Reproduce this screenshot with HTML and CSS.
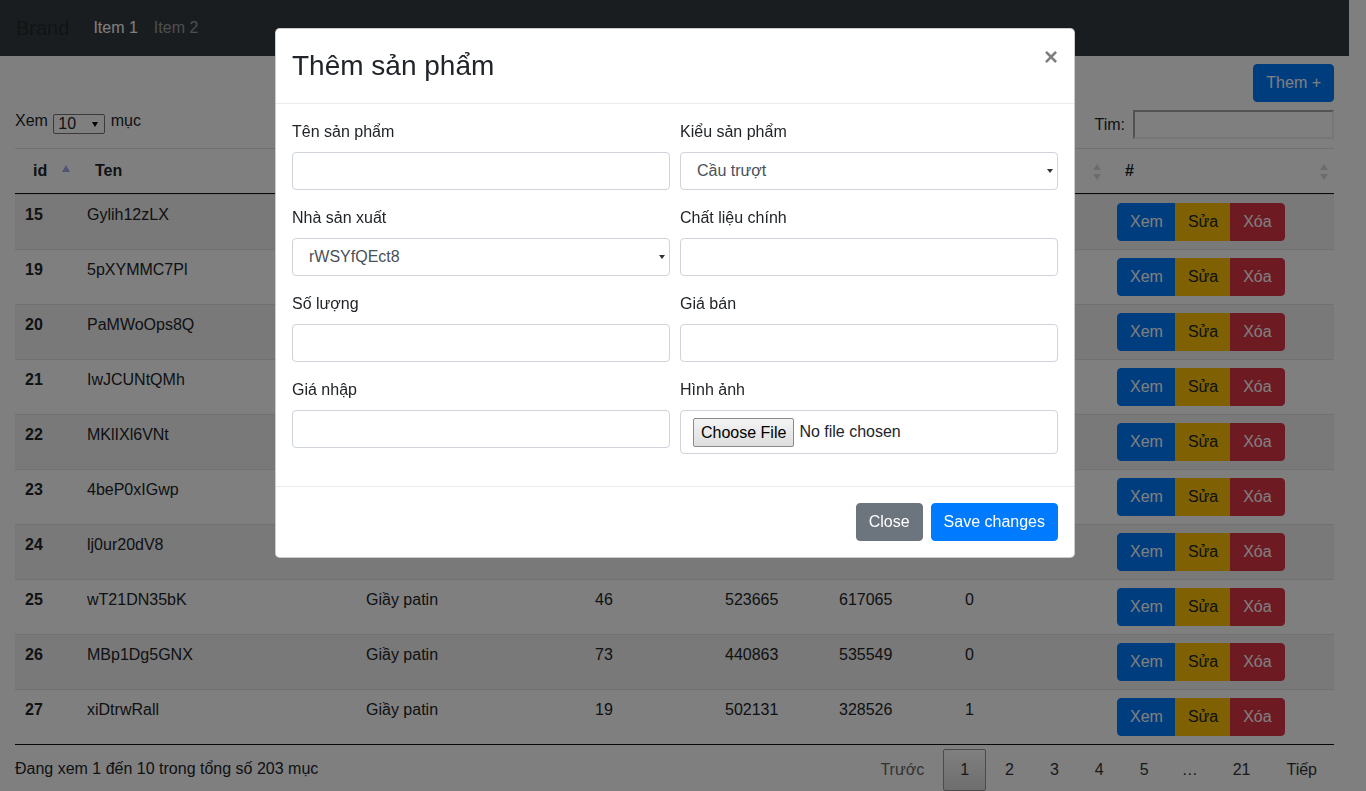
FILE: index.html
```html
<!DOCTYPE html>
<html lang="vi">
<head>
<meta charset="utf-8">
<title>Sản phẩm</title>
<link rel="stylesheet" href="styles.css">
</head>
<body>
<nav class="navbar">
  <span class="brand">Brand</span>
  <span class="nav-link active">Item 1</span>
  <span class="nav-link">Item 2</span>
</nav>

<div class="container">
  <div class="toolbar">
    <button class="btn btn-primary">Them +</button>
  </div>

  <div class="dt-top">
    <div class="dt-length">Xem <span class="len-select"><span>10</span><i class="len-arrow"></i></span> mục</div>
    <div class="dt-search"><span>Tim:</span><span class="search-input"></span></div>
  </div>

  <table class="dt">
    <colgroup>
      <col class="c1"><col class="c2"><col class="c3"><col class="c4"><col class="c5"><col class="c6"><col class="c7"><col class="c8">
    </colgroup>
    <thead>
      <tr>
        <th>id<i class="sort-asc"></i></th>
        <th>Ten<i class="sort-both"></i></th>
        <th>Loai<i class="sort-both"></i></th>
        <th>So luong<i class="sort-both"></i></th>
        <th>Gia nhap<i class="sort-both"></i></th>
        <th>Gia ban<i class="sort-both"></i></th>
        <th>Trang thai<i class="sort-both"></i></th>
        <th>#<i class="sort-both"></i></th>
      </tr>
    </thead>
    <tbody>
      <tr class="odd"><td class="id">15</td><td>Gylih12zLX</td><td>Giầy patin</td><td>12</td><td>412093</td><td>522341</td><td>0</td><td><div class="btn-group"><span class="gbtn xem">Xem</span><span class="gbtn sua">Sửa</span><span class="gbtn xoa">Xóa</span></div></td></tr>
      <tr><td class="id">19</td><td>5pXYMMC7Pl</td><td>Cầu trượt</td><td>58</td><td>338120</td><td>471905</td><td>1</td><td><div class="btn-group"><span class="gbtn xem">Xem</span><span class="gbtn sua">Sửa</span><span class="gbtn xoa">Xóa</span></div></td></tr>
      <tr class="odd"><td class="id">20</td><td>PaMWoOps8Q</td><td>Giầy patin</td><td>34</td><td>290441</td><td>610228</td><td>0</td><td><div class="btn-group"><span class="gbtn xem">Xem</span><span class="gbtn sua">Sửa</span><span class="gbtn xoa">Xóa</span></div></td></tr>
      <tr><td class="id">21</td><td>IwJCUNtQMh</td><td>Cầu trượt</td><td>81</td><td>505776</td><td>398214</td><td>1</td><td><div class="btn-group"><span class="gbtn xem">Xem</span><span class="gbtn sua">Sửa</span><span class="gbtn xoa">Xóa</span></div></td></tr>
      <tr class="odd"><td class="id">22</td><td>MKlIXl6VNt</td><td>Giầy patin</td><td>27</td><td>472810</td><td>553019</td><td>0</td><td><div class="btn-group"><span class="gbtn xem">Xem</span><span class="gbtn sua">Sửa</span><span class="gbtn xoa">Xóa</span></div></td></tr>
      <tr><td class="id">23</td><td>4beP0xIGwp</td><td>Giầy patin</td><td>65</td><td>361297</td><td>489602</td><td>0</td><td><div class="btn-group"><span class="gbtn xem">Xem</span><span class="gbtn sua">Sửa</span><span class="gbtn xoa">Xóa</span></div></td></tr>
      <tr class="odd"><td class="id">24</td><td>lj0ur20dV8</td><td>Cầu trượt</td><td>9</td><td>580314</td><td>634870</td><td>1</td><td><div class="btn-group"><span class="gbtn xem">Xem</span><span class="gbtn sua">Sửa</span><span class="gbtn xoa">Xóa</span></div></td></tr>
      <tr><td class="id">25</td><td>wT21DN35bK</td><td>Giầy patin</td><td>46</td><td>523665</td><td>617065</td><td>0</td><td><div class="btn-group"><span class="gbtn xem">Xem</span><span class="gbtn sua">Sửa</span><span class="gbtn xoa">Xóa</span></div></td></tr>
      <tr class="odd"><td class="id">26</td><td>MBp1Dg5GNX</td><td>Giầy patin</td><td>73</td><td>440863</td><td>535549</td><td>0</td><td><div class="btn-group"><span class="gbtn xem">Xem</span><span class="gbtn sua">Sửa</span><span class="gbtn xoa">Xóa</span></div></td></tr>
      <tr><td class="id">27</td><td>xiDtrwRall</td><td>Giầy patin</td><td>19</td><td>502131</td><td>328526</td><td>1</td><td><div class="btn-group"><span class="gbtn xem">Xem</span><span class="gbtn sua">Sửa</span><span class="gbtn xoa">Xóa</span></div></td></tr>
    </tbody>
  </table>

  <div class="dt-bottom">
    <div class="dt-info">Đang xem 1 đến 10 trong tổng số 203 mục</div>
    <div class="dt-paging">
      <span class="pbtn disabled">Trước</span>
      <span class="pbtn current">1</span>
      <span class="pbtn">2</span>
      <span class="pbtn">3</span>
      <span class="pbtn">4</span>
      <span class="pbtn">5</span>
      <span class="ellipsis">…</span>
      <span class="pbtn">21</span>
      <span class="pbtn">Tiếp</span>
    </div>
  </div>
</div>

<div class="modal">
  <div class="modal-dialog">
    <div class="modal-content">
      <div class="modal-header">
        <h3 class="modal-title">Thêm sản phẩm</h3>
        <span class="close">×</span>
      </div>
      <div class="modal-body">
        <div class="form-row">
          <div class="col">
            <label class="lbl">Tên sản phẩm</label>
            <div class="field"></div>
          </div>
          <div class="col">
            <label class="lbl">Kiểu sản phẩm</label>
            <div class="field select">Cầu trượt<i class="sel-arrow"></i></div>
          </div>
        </div>
        <div class="form-row">
          <div class="col">
            <label class="lbl">Nhà sản xuất</label>
            <div class="field select">rWSYfQEct8<i class="sel-arrow"></i></div>
          </div>
          <div class="col">
            <label class="lbl">Chất liệu chính</label>
            <div class="field"></div>
          </div>
        </div>
        <div class="form-row">
          <div class="col">
            <label class="lbl">Số lượng</label>
            <div class="field"></div>
          </div>
          <div class="col">
            <label class="lbl">Giá bán</label>
            <div class="field"></div>
          </div>
        </div>
        <div class="form-row">
          <div class="col">
            <label class="lbl">Giá nhập</label>
            <div class="field"></div>
          </div>
          <div class="col">
            <label class="lbl">Hình ảnh</label>
            <div class="field file"><span class="file-btn">Choose File</span><span>No file chosen</span></div>
          </div>
        </div>
      </div>
      <div class="modal-footer">
        <span class="btn btn-secondary">Close</span>
        <span class="btn btn-primary">Save changes</span>
      </div>
    </div>
  </div>
</div>
</body>
</html>
```

FILE: styles.css
```css
* { box-sizing: border-box; }
html, body { margin: 0; }
body {
  padding-right: 17px;
  font-family: "Liberation Sans", Arial, sans-serif;
  font-size: 16px;
  line-height: 1.5;
  color: #212529;
  background: #fff;
}

/* navbar */
.navbar {
  height: 56px;
  background: #343a40;
  display: flex;
  align-items: center;
  padding: 0 16px;
}
.brand {
  font-size: 20px;
  line-height: 30px;
  color: rgba(0, 0, 0, .35);
  margin-right: 16px;
}
.nav-link { padding: 0 8px; color: rgba(255, 255, 255, .5); }
.nav-link.active { color: #fff; }

.container { padding: 0 15px; }

.toolbar { display: flex; justify-content: flex-end; padding-top: 8px; }

.btn {
  display: inline-block;
  font: inherit;
  font-size: 16px;
  line-height: 24px;
  padding: 6px 12px;
  border: 1px solid transparent;
  border-radius: 4px;
  color: #fff;
}
.btn-primary { background: #007bff; border-color: #007bff; }
.btn-secondary { background: #6c757d; border-color: #6c757d; }

/* datatable top */
.dt-top {
  display: flex;
  justify-content: space-between;
  align-items: flex-start;
  margin-top: 7px;
  height: 30px;
}
.dt-length { line-height: 24px; }
.len-select {
  display: inline-flex;
  align-items: center;
  justify-content: space-between;
  width: 52px;
  height: 20px;
  margin: 0 1px;
  padding: 0 6px 0 4px;
  border: 1px solid #767676;
  border-radius: 2px;
  vertical-align: -3px;
  line-height: 18px;
}
.len-arrow {
  width: 0; height: 0;
  border-left: 3.5px solid transparent;
  border-right: 3.5px solid transparent;
  border-top: 5px solid #000;
}
.dt-search { display: flex; align-items: center; gap: 8px; margin-top: 1px; }
.search-input {
  display: block;
  width: 201px;
  height: 29px;
  border-style: solid;
  border-width: 2px;
  border-color: #a4a4a4 #ececec #ececec #a4a4a4;
  background: #fff;
}

/* table */
.dt {
  width: 1319px;
  table-layout: fixed;
  border-collapse: separate;
  border-spacing: 0;
  margin-top: 9px;
  border-bottom: 1px solid #111;
}
.c1 { width: 62px; } .c2 { width: 279px; } .c3 { width: 229px; } .c4 { width: 130px; }
.c5 { width: 114px; } .c6 { width: 126px; } .c7 { width: 152px; } .c8 { width: 227px; }
.dt th {
  position: relative;
  text-align: left;
  font-weight: 700;
  padding: 10px 18px;
  line-height: 24px;
  border-top: 1px solid #dee2e6;
  border-bottom: 1px solid #111;
  white-space: nowrap;
  overflow: hidden;
}
.sort-asc {
  position: absolute;
  right: 7px;
  top: 16px;
  width: 0; height: 0;
  border-left: 4.5px solid transparent;
  border-right: 4.5px solid transparent;
  border-bottom: 7px solid #a6a6ec;
}
.sort-both {
  position: absolute;
  right: 5px;
  top: 15px;
  width: 9px;
  height: 16px;
}
.sort-both::before, .sort-both::after {
  content: "";
  position: absolute;
  left: 0;
  width: 0; height: 0;
  border-left: 4.5px solid transparent;
  border-right: 4.5px solid transparent;
}
.sort-both::before { top: 0; border-bottom: 6px solid #d9d9d9; }
.sort-both::after { bottom: 0; border-top: 6px solid #d9d9d9; }

.dt td {
  padding: 8px 10px;
  line-height: 24px;
  vertical-align: top;
  border-top: 1px solid #dee2e6;
  white-space: nowrap;
}
.dt tr.odd td { background: #f2f2f2; }
.dt td.id { font-weight: 700; }

.btn-group { display: inline-flex; }
.gbtn {
  display: inline-block;
  padding: 6px 12px;
  line-height: 24px;
  border: 1px solid transparent;
  color: #fff;
}
.gbtn + .gbtn { margin-left: -1px; }
.gbtn.xem { background: #007bff; border-color: #007bff; border-radius: 4px 0 0 4px; }
.gbtn.sua { background: #ffc107; border-color: #ffc107; color: #212529; }
.gbtn.xoa { background: #dc3545; border-color: #dc3545; border-radius: 0 4px 4px 0; }

/* bottom */
.dt-bottom { display: flex; justify-content: space-between; align-items: flex-start; }
.dt-info { padding-top: 12px; line-height: 24px; }
.dt-paging { display: flex; padding-top: 4px; line-height: 24px; }
.pbtn {
  padding: 8px 16px;
  margin-left: 2px;
  border: 1px solid transparent;
  border-radius: 2px;
  color: #333;
}
.pbtn.disabled { color: #666; }
.pbtn.current {
  border-color: #979797;
  background: linear-gradient(#fff, #dcdcdc);
}
.ellipsis { padding: 9px 16px; color: #333; }

/* modal */
.modal {
  position: fixed;
  top: 0; left: 0; right: 0; bottom: 0;
  background: rgba(0, 0, 0, .5);
  padding-right: 16px;
}
.modal-dialog { width: 800px; margin: 28px auto; }
.modal-content {
  background: #fff;
  border: 1px solid rgba(0, 0, 0, .2);
  border-radius: 4.8px;
}
.modal-header {
  display: flex;
  align-items: flex-start;
  padding: 16px;
  border-bottom: 1px solid #e9ecef;
}
.modal-title {
  margin: 0;
  font-size: 28px;
  font-weight: 500;
  line-height: 1.5;
}
.close {
  margin: -16px -16px -16px auto;
  padding: 16px;
  font-size: 24px;
  font-weight: 700;
  line-height: 1;
  color: #000;
  opacity: .5;
}
.modal-body { padding: 16px; }
.form-row { display: flex; margin: 0 -5px; }
.col { flex: 1 1 0; padding: 0 5px; margin-bottom: 16px; }
.lbl { display: inline-block; margin-bottom: 8px; line-height: 24px; }
.field {
  position: relative;
  height: 38px;
  padding: 6px 12px;
  border: 1px solid #ced4da;
  border-radius: 4px;
  line-height: 24px;
  background: #fff;
}
.field.select { padding-left: 16px; color: #495057; }
.sel-arrow {
  position: absolute;
  right: 4px;
  top: 16px;
  width: 0; height: 0;
  border-left: 3px solid transparent;
  border-right: 3px solid transparent;
  border-top: 4px solid #333;
}
.field.file {
  height: 44px;
  display: flex;
  align-items: center;
  padding: 0 12px;
}
.file-btn {
  display: inline-block;
  height: 29px;
  padding: 1px 7px;
  line-height: 25px;
  border: 1px solid #8a8a8a;
  border-radius: 2px;
  background: linear-gradient(#f4f4f4, #dedede);
  margin-right: 5px;
  color: #000;
}
.modal-footer {
  display: flex;
  justify-content: flex-end;
  gap: 8px;
  padding: 16px;
  border-top: 1px solid #e9ecef;
}
```
